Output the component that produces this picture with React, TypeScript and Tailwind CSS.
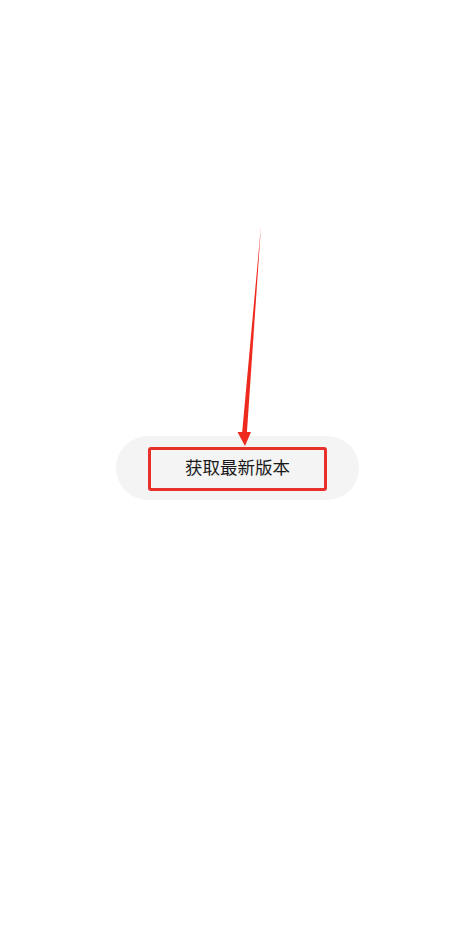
export default function App() {
  return (
    <div className="relative w-full h-[947px] bg-white pt-[436px]" style={{ fontFamily: '"Noto Sans CJK SC", "Noto Sans", sans-serif' }}>
      <div className="ml-[116px] w-[243px] h-[64px] rounded-full bg-[#f4f4f4] flex items-center justify-center">
        <div className="w-[179px] h-[44px] mt-[1px] border-[3px] border-[#e8302a] rounded-[3px] flex items-center justify-center">
          <span className="text-[17.5px] text-[#1a1a1a] leading-none pb-[3px]">获取最新版本</span>
        </div>
      </div>
      {/* annotation arrow */}
      <svg className="absolute left-0 top-0" width="474" height="947" viewBox="0 0 474 947">
        <polygon points="261,226 246.8,434 242,434" fill="#ee2a1f" />
        <polygon points="237.5,432 251,432 245,446" fill="#ee2a1f" />
      </svg>
    </div>
  );
}
